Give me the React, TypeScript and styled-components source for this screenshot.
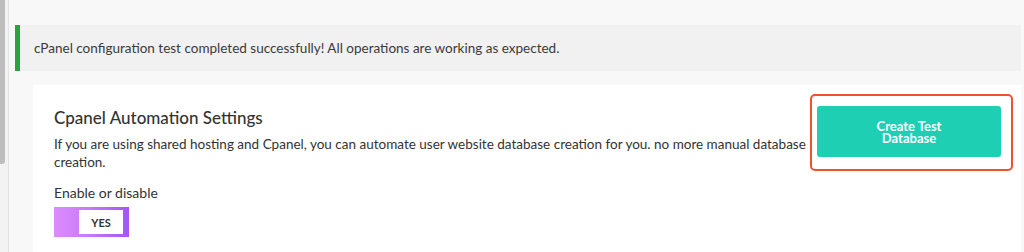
import React from 'react';
import styled, { createGlobalStyle } from 'styled-components';

const GlobalStyle = createGlobalStyle`
  html, body {
    margin: 0;
    padding: 0;
    background: #f8f8f8;
    font-family: Lato, 'Open Sans', sans-serif;
    color: #333;
    overflow: hidden;
  }
`;

const Page = styled.div`
  display: flex;
  height: 252px;
`;

const Rail = styled.div`
  width: 8px;
  flex-shrink: 0;
  background: #f3f3f3;
  border-right: 1px solid #e4e4e4;
`;

const Thumb = styled.div`
  width: 5px;
  height: 164px;
  background: #bdbdbd;
  border-radius: 0 0 3px 0;
`;

const Main = styled.div`
  flex: 1;
  padding: 25px 3px 0 6px;
  display: flex;
  flex-direction: column;
`;

const Notice = styled.div`
  height: 46px;
  display: flex;
  align-items: center;
  background: #f1f1f1;
  border-left: 5px solid #2ba33a;
  padding-left: 14px;
  font-size: 13.5px;
  color: #3a3a3a;
`;

const Card = styled.div`
  margin: 14px 0 0 18px;
  background: #fff;
  flex: 1;
  display: flex;
  align-items: flex-start;
  gap: 3px;
  padding: 9px 8px 0 21px;
`;

const Info = styled.div`
  flex: 1;
  padding-top: 12px;
`;

const Title = styled.h2`
  margin: 0;
  font-size: 17px;
  font-weight: 500;
  line-height: 24px;
  color: #333;
`;

const Desc = styled.p`
  margin: 5px 0 0;
  font-size: 13.5px;
  line-height: 18px;
  color: #333;
`;

const Label = styled.div`
  margin-top: 13px;
  font-size: 14px;
  line-height: 18px;
`;

const Toggle = styled.div`
  margin-top: 5px;
  width: 75px;
  height: 30px;
  box-sizing: border-box;
  padding: 3px 6px 3px 25px;
  background: linear-gradient(90deg, #dd8cfb 0%, #c77af9 45%, #a456f6 100%);
`;

const Knob = styled.div`
  height: 100%;
  background: #fff;
  display: flex;
  align-items: center;
  justify-content: center;
  font-size: 11px;
  font-weight: 700;
  color: #333;
`;

const Highlight = styled.div`
  flex-shrink: 0;
  border: 2px solid #f1512f;
  border-radius: 5px;
  padding: 10px 10px 12px 5px;
`;

const CreateButton = styled.button`
  width: 184px;
  height: 51px;
  border: none;
  border-radius: 3px;
  background: #1ecfb4;
  color: #fff;
  font-family: inherit;
  font-size: 13px;
  font-weight: 700;
  line-height: 12px;
  padding: 0 46px;
  cursor: pointer;
`;

const App: React.FC = () => {
  const [enabled] = React.useState(true);

  return (
    <>
      <GlobalStyle />
      <Page>
        <Rail>
          <Thumb />
        </Rail>
        <Main>
          <Notice>
            cPanel configuration test completed successfully! All operations are working as expected.
          </Notice>
          <Card>
            <Info>
              <Title>Cpanel Automation Settings</Title>
              <Desc>
                If you are using shared hosting and Cpanel, you can automate user website database creation for
                you. no more manual database creation.
              </Desc>
              <Label>Enable or disable</Label>
              <Toggle>
                <Knob>{enabled ? 'YES' : 'NO'}</Knob>
              </Toggle>
            </Info>
            <Highlight>
              <CreateButton>Create Test Database</CreateButton>
            </Highlight>
          </Card>
        </Main>
      </Page>
    </>
  );
};

export default App;
